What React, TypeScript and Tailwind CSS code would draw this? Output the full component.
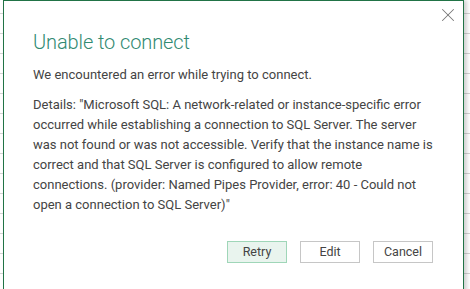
import { X } from "lucide-react";

const details = [
  'Details: "Microsoft SQL: A network-related or instance-specific error',
  "occurred while establishing a connection to SQL Server. The server",
  "was not found or was not accessible. Verify that the instance name is",
  "correct and that SQL Server is configured to allow remote",
  "connections. (provider: Named Pipes Provider, error: 40 - Could not",
  'open a connection to SQL Server)"',
];

function DialogButton({ label, primary }: { label: string; primary?: boolean }) {
  return (
    <button
      className={
        primary
          ? "h-[22px] w-[60px] border border-[#9fd6b8] bg-[#e9f4ee] text-[12.5px] text-[#444]"
          : "h-[22px] w-[60px] border border-[#c6c6c6] bg-white text-[12.5px] text-[#444]"
      }
    >
      {label}
    </button>
  );
}

export default function App() {
  return (
    <div
      className="h-[289px] w-[470px] overflow-hidden bg-white bg-[linear-gradient(to_bottom,transparent_19px,#d4d4d4_19px)] bg-[length:100%_20px] bg-[position:0_-6px]"
      style={{ fontFamily: "Roboto, 'Liberation Sans', sans-serif" }}
    >
      <div className="relative ml-[3px] h-[300px] w-[461px] border-x border-t border-[#217346] bg-white pl-[29px] pr-[30px] pt-[26px] shadow-[3px_0_4px_rgba(0,0,0,0.18)]">
        <button className="absolute right-[4px] top-[3px] text-[#777]">
          <X size={22} strokeWidth={1.1} />
        </button>

        <h3 className="h-[30px] text-[20px] font-light leading-[30px] tracking-[-0.1px] text-[#318a72]">
          Unable to connect
        </h3>

        <p className="mt-[8px] text-[13px] leading-[20px] text-[#444]">
          We encountered an error while trying to connect.
        </p>

        <p className="mt-[10px] text-[13px] leading-[20px] text-[#444]">
          {details.map((line) => (
            <span key={line} className="block whitespace-nowrap">
              {line}
            </span>
          ))}
        </p>

        <div className="mt-[26px] flex justify-end gap-[13px]">
          <DialogButton label="Retry" primary />
          <DialogButton label="Edit" />
          <DialogButton label="Cancel" />
        </div>
      </div>
    </div>
  );
}
